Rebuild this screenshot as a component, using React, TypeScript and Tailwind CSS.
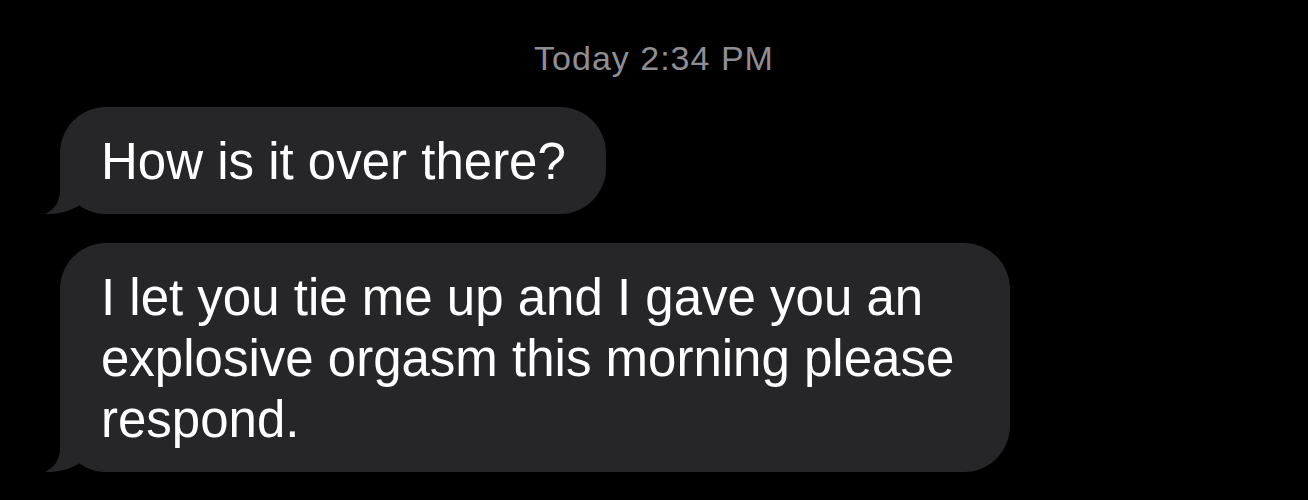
const font = { fontFamily: '"Liberation Sans", Arial, sans-serif' };

function Tail() {
  return (
    <svg
      className="absolute bottom-0 left-[-16px]"
      width="70"
      height="60"
      viewBox="0 0 70 60"
      aria-hidden="true"
    >
      <path
        d="M16,0 L16,37 C16,47 11,55 1,60 C14,60.5 28,57 37,50 C44,56 52,60 66,60 L66,0 Z"
        fill="#262629"
      />
    </svg>
  );
}

function Bubble({ children, className = "" }: { children: React.ReactNode; className?: string }) {
  return (
    <div className={`relative ml-[60px] w-fit ${className}`}>
      <Tail />
      <div className="relative rounded-[46px] bg-[#262629] pl-[41px] pr-[40px] pt-[24px] pb-[22px] text-[51px] leading-[61px] text-white">
        {children}
      </div>
    </div>
  );
}

export default function App() {
  return (
    <div className="h-[500px] w-full overflow-hidden bg-black" style={font}>
      <div className="pt-[38px] text-center text-[34px] leading-[40px] tracking-[1px] text-[#8e8e93]">
        Today 2:34 PM
      </div>
      <div className="mt-[29px] flex flex-col gap-[29px]">
        <Bubble>How is it over there?</Bubble>
        <Bubble className="max-w-[950px]">
          I let you tie me up and I gave you an explosive orgasm this morning please respond.
        </Bubble>
      </div>
    </div>
  );
}
